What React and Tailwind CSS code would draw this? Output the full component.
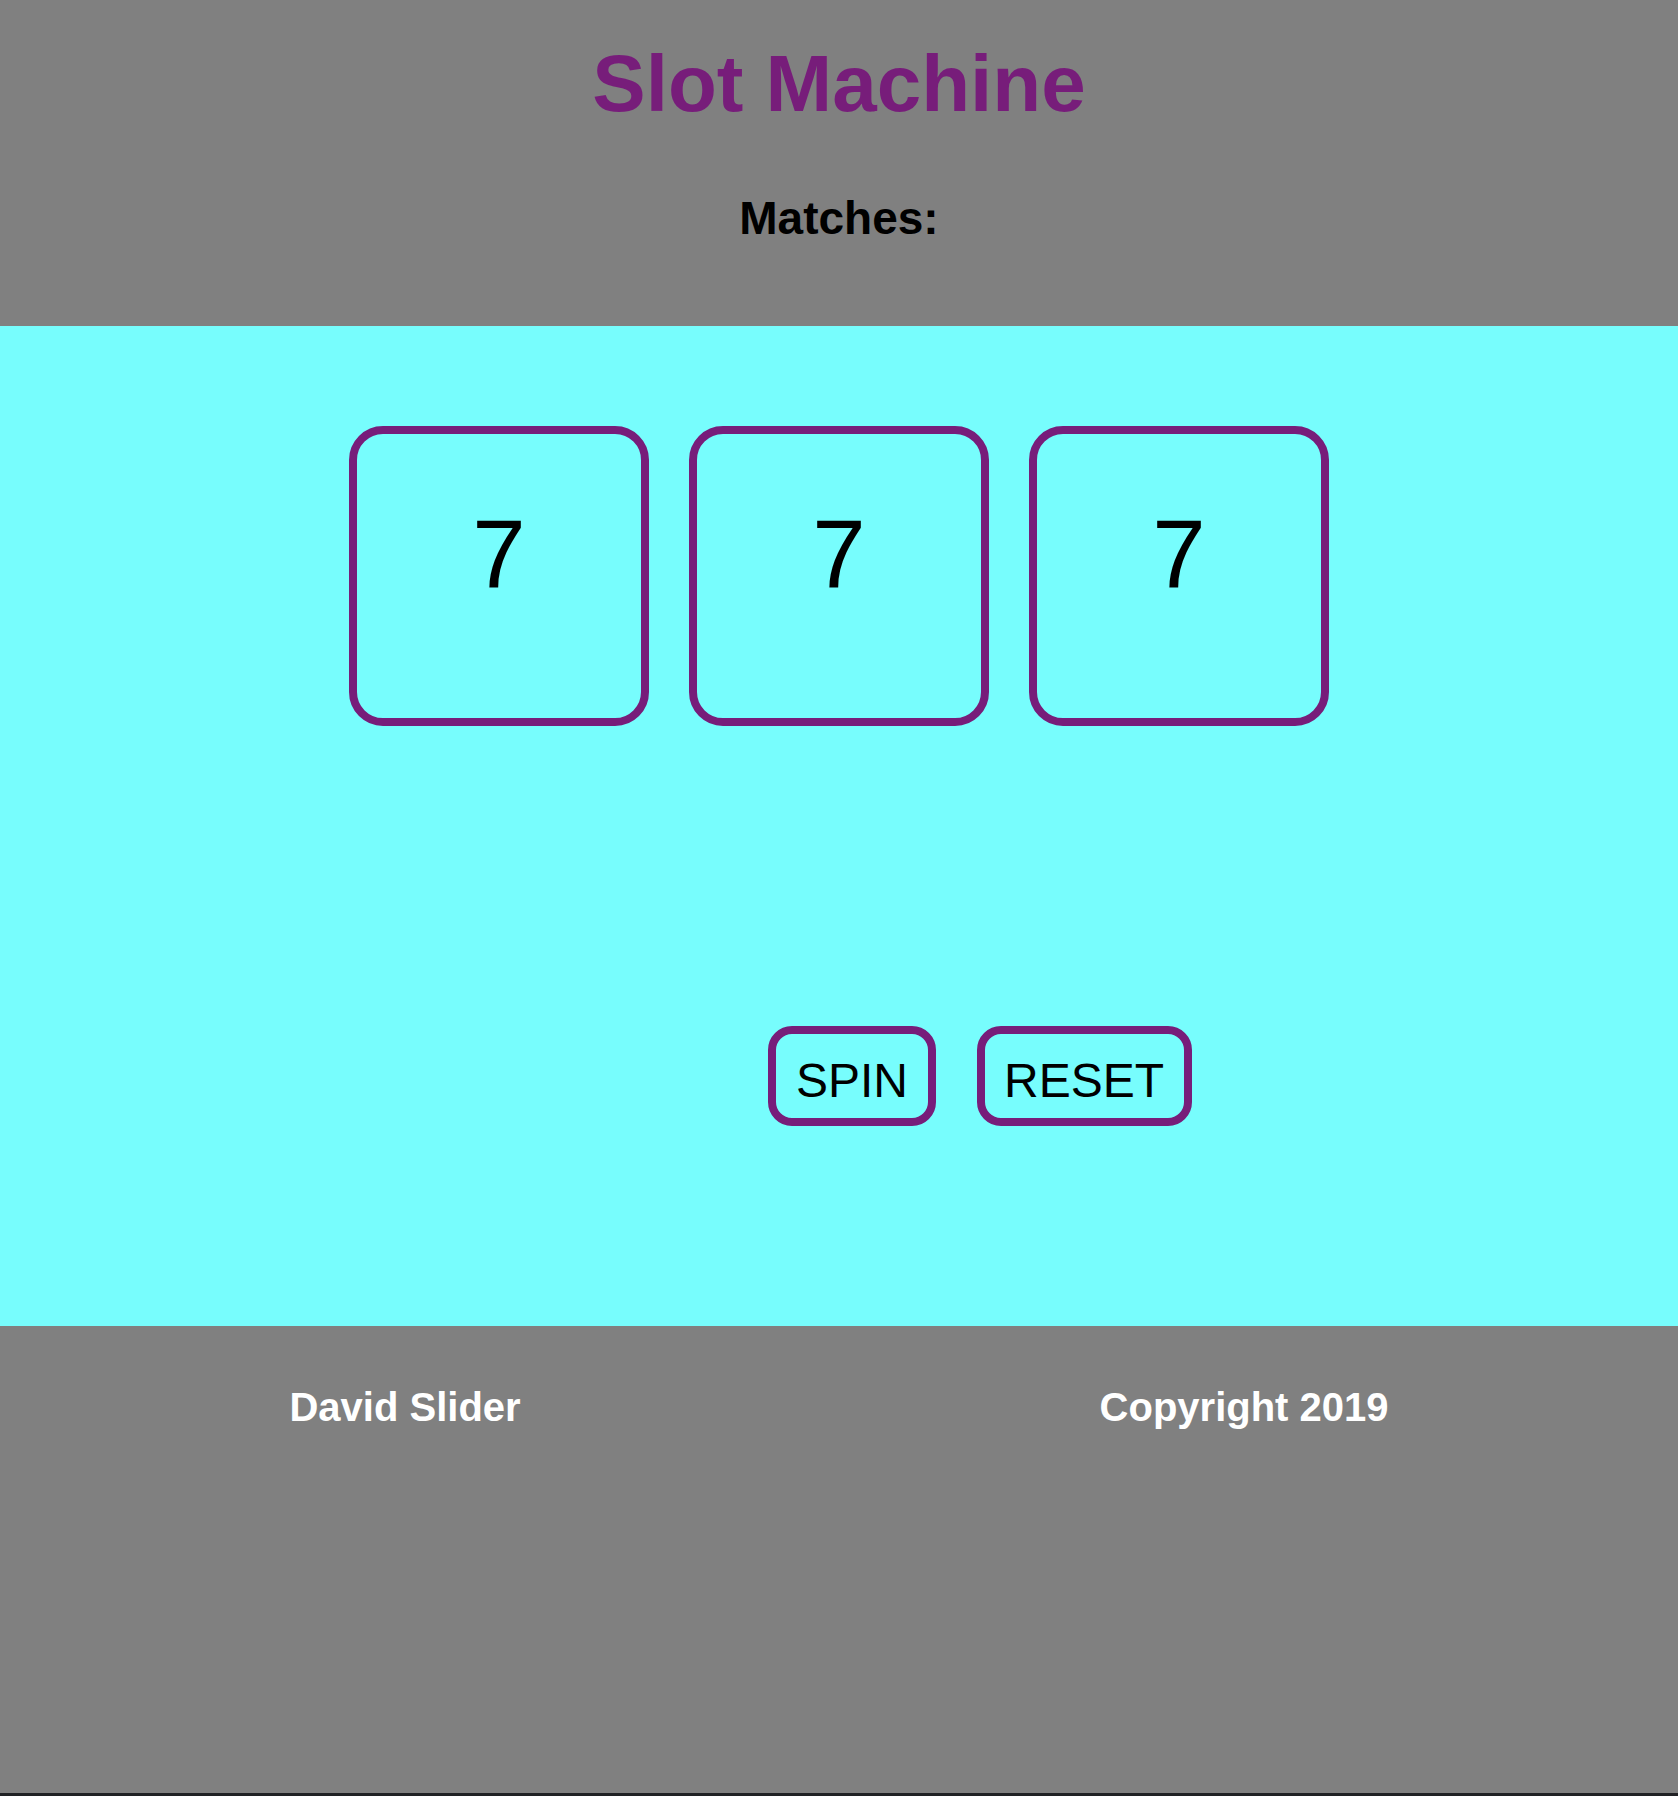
const symbols = ["7", "7", "7"];

const Reel = ({ symbol }) => (
  <div className="w-[300px] h-[300px] border-[8px] border-[#771d7a] rounded-[34px] flex justify-center pt-[65px]">
    <span className="text-[96px] leading-[normal] text-black">{symbol}</span>
  </div>
);

const App = () => {
  return (
    <div className="w-full min-h-[1796px] flex flex-col font-['Liberation_Sans',Arial,sans-serif]">
      <header className="h-[326px] bg-[#808080] flex flex-col items-center pt-[38px]">
        <h1 className="text-[80px] leading-[normal] font-bold text-[#771d7a]">
          Slot Machine
        </h1>
        <h2 className="mt-[61px] text-[46px] leading-[normal] font-bold text-black">
          Matches:
        </h2>
      </header>

      <main className="h-[1000px] bg-[#77fdfd] flex flex-col items-center pt-[100px]">
        <div className="flex gap-[40px]">
          {symbols.map((s, i) => (
            <Reel key={i} symbol={s} />
          ))}
        </div>
        <div className="w-full flex justify-center gap-[41px] pl-[282px] mt-[300px]">
          <button className="h-[100px] border-[8px] border-[#771d7a] rounded-[24px] px-[19.5px] pt-[19px] text-[48px] leading-[normal] text-black flex items-start">
            SPIN
          </button>
          <button className="h-[100px] border-[8px] border-[#771d7a] rounded-[24px] px-[19.5px] pt-[19px] text-[48px] leading-[normal] text-black flex items-start">
            RESET
          </button>
        </div>
      </main>

      <footer className="flex-1 bg-[#808080] flex justify-around items-start pt-[59px]">
        <h3 className="text-[40px] leading-[normal] font-bold text-white">David Slider</h3>
        <h3 className="text-[40px] leading-[normal] font-bold text-white">Copyright 2019</h3>
      </footer>
      <div className="h-[3px] bg-[#202124]" />
    </div>
  );
};

export default App;
